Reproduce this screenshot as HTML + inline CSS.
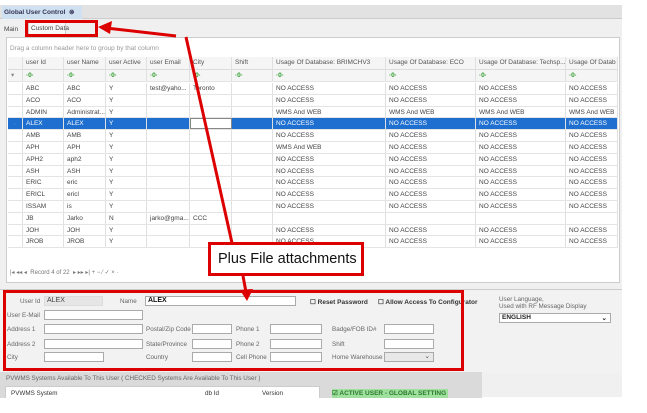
<!DOCTYPE html>
<html><head><meta charset="utf-8"><style>
*{margin:0;padding:0;box-sizing:border-box}
body{width:647px;height:413px;background:#fff;font-family:"Liberation Sans",sans-serif;font-size:6.5px;color:#444;position:relative;overflow:hidden}
.a{position:absolute;white-space:nowrap}
.row{position:absolute;left:8px;width:610px;height:11.8px;border-bottom:1px solid #e4e4e4}
.c{position:absolute;top:0;height:100%;border-right:1px solid #e0e0e0;padding-left:3px;line-height:11px;white-space:nowrap;overflow:hidden}
.sel{background:#1e6fd0;color:#fff}
.in{position:absolute;background:#fff;border:1px solid #aaa;height:10px;white-space:nowrap}
.lb{position:absolute;color:#666;font-size:6.3px;white-space:nowrap}
.f{color:#2a9a2a;font-weight:bold}
</style></head><body>
<div class="a" style="left:0;top:5px;width:622px;height:392px;background:#f0f0f0"></div>
<div class="a" style="left:0;top:5px;width:622px;height:14px;background:#e2e2e2;border-bottom:1px solid #ccc"></div>
<div class="a" style="left:2px;top:6px;width:80px;height:13px;background:#cfe0f0;font-weight:bold;color:#335;line-height:13px;padding-left:2px;font-size:6.5px">Global User Control &nbsp;⊗</div>
<div class="a" style="left:4px;top:26px">Main</div>
<div class="a" style="left:28px;top:22px;width:38px;height:13px;background:#f8f8f8;border:1px solid #ccc;line-height:12px;padding-left:2px">Custom Data</div>
<div class="a" style="left:6px;top:37px;width:614px;height:246px;background:#fff;border:1px solid #ccc"></div>
<div class="a" style="left:10px;top:45px;color:#999">Drag a column header here to group by that column</div>
<div class="a" style="left:8px;top:57px;width:610px;height:25px;background:#f5f5f5;border-bottom:1px solid #ddd"></div>
<div id="g"></div>
<div class="a" style="left:10px;top:269px;color:#777;font-size:6px">|◂ ◂◂ ◂ &nbsp;Record 4 of 22 &nbsp;▸ ▸▸ ▸| + − ⁄ ✓ × ·</div>
<div class="a" style="left:0;top:289px;width:622px;height:84px;background:#f2f2f2;border-top:1px solid #ccc"></div>
<div class="lb" style="left:20px;top:298px">User Id</div>
<div class="a" style="left:44px;top:296px;width:59px;height:10px;background:#e6e6e6;border:1px solid #ddd;font-size:7px;padding-left:2px">ALEX</div>
<div class="lb" style="left:120px;top:298px">Name</div>
<div class="in" style="left:145px;top:296px;width:151px;font-weight:bold;font-size:7px;padding-left:2px;color:#111">ALEX</div>
<div class="a" style="left:310px;top:298px;color:#333;font-weight:bold;font-size:6.5px">☐ Reset Password</div>
<div class="a" style="left:378px;top:298px;color:#333;font-weight:bold;font-size:6.5px">☐ Allow Access To Configurator</div>
<div class="lb" style="left:7px;top:312px">User E-Mail</div><div class="in" style="left:44px;top:310px;width:99px"></div>
<div class="lb" style="left:7px;top:326px">Address 1</div><div class="in" style="left:44px;top:324px;width:99px"></div>
<div class="lb" style="left:7px;top:341px">Address 2</div><div class="in" style="left:44px;top:339px;width:99px"></div>
<div class="lb" style="left:7px;top:354px">City</div><div class="in" style="left:44px;top:352px;width:60px"></div>
<div class="lb" style="left:146px;top:326px">Postal/Zip Code</div><div class="in" style="left:192px;top:324px;width:40px"></div>
<div class="lb" style="left:146px;top:341px">State/Province</div><div class="in" style="left:192px;top:339px;width:40px"></div>
<div class="lb" style="left:146px;top:354px">Country</div><div class="in" style="left:192px;top:352px;width:40px"></div>
<div class="lb" style="left:236px;top:326px">Phone 1</div><div class="in" style="left:270px;top:324px;width:52px"></div>
<div class="lb" style="left:236px;top:341px">Phone 2</div><div class="in" style="left:270px;top:339px;width:52px"></div>
<div class="lb" style="left:236px;top:354px">Cell Phone</div><div class="in" style="left:270px;top:352px;width:52px"></div>
<div class="lb" style="left:332px;top:326px">Badge/FOB ID#</div><div class="in" style="left:384px;top:324px;width:50px"></div>
<div class="lb" style="left:332px;top:341px">Shift</div><div class="in" style="left:384px;top:339px;width:50px"></div>
<div class="lb" style="left:332px;top:354px">Home Warehouse</div><div class="in" style="left:384px;top:352px;width:50px;background:#e8e8e8;text-align:right;padding-right:3px;line-height:8px">⌄</div>
<div class="lb" style="left:499px;top:296px;line-height:7px">User Language,<br>Used with RF Message Display</div>
<div class="in" style="left:499px;top:313px;width:112px;font-weight:bold;color:#222;padding-left:2px;font-size:6.5px">ENGLISH<span style="float:right;margin-right:3px">⌄</span></div>
<div class="a" style="left:0;top:372px;width:482px;height:28px;background:#dadada"></div>
<div class="lb" style="left:6px;top:375px">PVWMS Systems Available To This User ( CHECKED Systems Are Available To This User )</div>
<div class="a" style="left:5px;top:386px;width:315px;height:14px;background:#fff;border:1px solid #ccc"></div>
<div class="lb" style="left:11px;top:390px;color:#333">PVWMS System</div>
<div class="lb" style="left:205px;top:390px;color:#333">db Id</div>
<div class="lb" style="left:262px;top:390px;color:#333">Version</div>
<div class="a" style="left:332px;top:389px;height:10px;width:116px;background:#9fe09f;color:#2a7a2a;font-weight:bold;font-size:6.5px;line-height:10px">☑ ACTIVE USER - GLOBAL SETTING</div>
<div class="a" style="left:0;top:398px;width:647px;height:15px;background:#fff"></div>
<div class="a" style="left:622px;top:0;width:25px;height:413px;background:#fff"></div>
<div class="a" style="left:25px;top:20px;width:73px;height:17px;border:3px solid #d00"></div>
<div class="a" style="left:3px;top:290px;width:461px;height:81px;border:3px solid #d00"></div>
<svg class="a" style="left:0;top:0" width="647" height="413">
<g stroke="#d00" stroke-width="3" fill="#d00">
<line x1="186" y1="37" x2="232" y2="243"/>
<line x1="176" y1="36" x2="106" y2="28"/>
<polygon points="98,27 112,21 110,34" stroke="none"/>
<line x1="243" y1="276" x2="246" y2="292"/>
<polygon points="247,301 240,290 253,289" stroke="none"/>
</g></svg>
<div class="a" style="left:208px;top:242px;width:156px;height:34px;background:#fff;border:3px solid #d00;font-size:14.5px;color:#111;line-height:28px;padding-left:7px">Plus File attachments</div>
<script>
const cols=[[0,15,''],[15,41,'user Id'],[56,42,'user Name'],[98,41,'user Active'],[139,43,'user Email'],[182,42,'City'],[224,41,'Shift'],[265,113,'Usage Of Database: BRIMCHV3'],[378,90,'Usage Of Database: ECO'],[468,90,'Usage Of Database: Techsp...'],[558,52,'Usage Of Datab']];
const data=[['ABC','ABC','Y','test@yaho...','Toronto','','NO ACCESS','NO ACCESS','NO ACCESS','NO ACCESS'],['ACO','ACO','Y','','','','NO ACCESS','NO ACCESS','NO ACCESS','NO ACCESS'],['ADMIN','Administrat...','Y','','','','WMS And WEB','WMS And WEB','WMS And WEB','WMS And WEB'],['ALEX','ALEX','Y','','','','NO ACCESS','NO ACCESS','NO ACCESS','NO ACCESS'],['AMB','AMB','Y','','','','NO ACCESS','NO ACCESS','NO ACCESS','NO ACCESS'],['APH','APH','Y','','','','WMS And WEB','NO ACCESS','NO ACCESS','NO ACCESS'],['APH2','aph2','Y','','','','NO ACCESS','NO ACCESS','NO ACCESS','NO ACCESS'],['ASH','ASH','Y','','','','NO ACCESS','NO ACCESS','NO ACCESS','NO ACCESS'],['ERIC','eric','Y','','','','NO ACCESS','NO ACCESS','NO ACCESS','NO ACCESS'],['ERICL','ericl','Y','','','','NO ACCESS','NO ACCESS','NO ACCESS','NO ACCESS'],['ISSAM','is','Y','','','','NO ACCESS','NO ACCESS','NO ACCESS','NO ACCESS'],['JB','Jarko','N','jarko@gma...','CCC','','','','',''],['JOH','JOH','Y','','','','NO ACCESS','NO ACCESS','NO ACCESS','NO ACCESS'],['JROB','JROB','Y','','','','NO ACCESS','NO ACCESS','NO ACCESS','NO ACCESS']];
let h='';
function row(top,cells,cls,st){h+=`<div class="row ${cls||''}" style="top:${top}px;${st||''}">`;cols.forEach((c,i)=>{let t=cells[i];let s='';if(cls==='sel'&&i==5)s='background:#fff;border:1px solid #888;';h+=`<div class="c" style="left:${c[0]}px;width:${c[1]}px;${s}">${t}</div>`});h+='</div>';}
row(57,cols.map(c=>c[2]),'','height:13px;border-bottom:1px solid #ddd;color:#555');
row(70,cols.map((c,i)=>i==0?'<span style="color:#888">▾</span>':'<span class="f">·0·</span>'),'','height:12px');
data.forEach((d,i)=>row(83+i*11.8,[i==3?'<span style="color:#48c">→</span>':''].concat(d),i==3?'sel':''));
document.getElementById('g').innerHTML=h;
</script>
</body></html>
